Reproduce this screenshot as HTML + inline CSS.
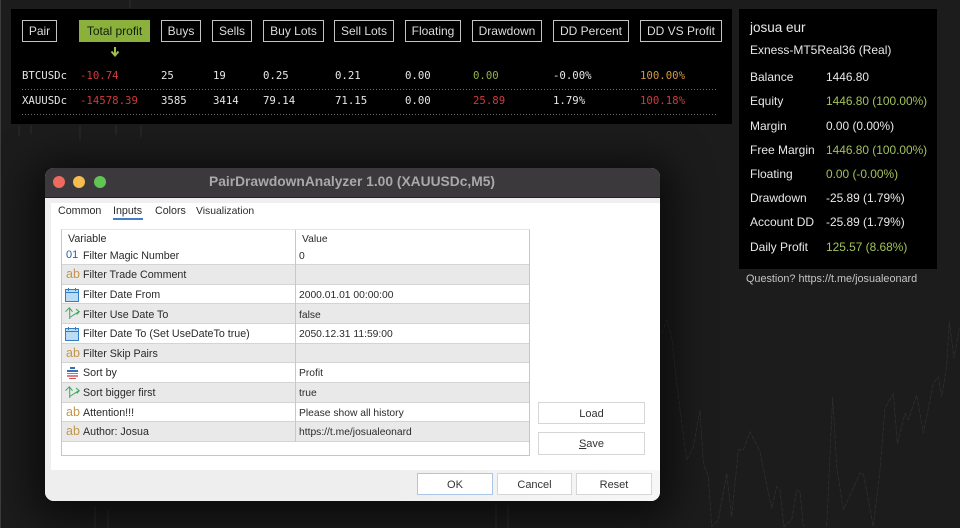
<!DOCTYPE html>
<html><head><meta charset="utf-8"><style>
html,body{margin:0;padding:0}
body{width:960px;height:528px;overflow:hidden;background:#1c1c1c;position:relative;font-family:"Liberation Sans",sans-serif}
.a{position:absolute;white-space:nowrap}
.btn{position:absolute;top:20px;height:20px;border:1px solid #c4c4c4;color:#dcdcdc;font-size:12px;line-height:20px;text-align:center;white-space:nowrap;box-sizing:content-box}
.m{position:absolute;font:10.7px/12px "DejaVu Sans Mono",monospace;color:#e6e6e6;white-space:nowrap}
.r{color:#cf3a3a}.g{color:#8fb04a}.o{color:#d39a3c}
.dot{position:absolute;left:22px;width:695px;height:1px;background:repeating-linear-gradient(90deg,#6e6e6e 0 1px,transparent 1px 3px)}
.l{position:absolute;left:750px;font-size:12px;line-height:14px;color:#e8e8e8;white-space:nowrap}
.v{position:absolute;left:826px;font-size:11.9px;line-height:14px;color:#e8e8e8;white-space:nowrap}
.vg{color:#a3c25a}
.row{position:absolute;left:62px;width:467px;border-bottom:1px solid #d4d4d4;box-sizing:border-box}
.t{position:absolute;left:83px;font:10.7px/14px "Liberation Sans",sans-serif;color:#2a2a2a;white-space:nowrap}
.u{position:absolute;left:299px;font:10.3px/18px "Liberation Sans",sans-serif;color:#2a2a2a;white-space:nowrap}
.ab{position:absolute;left:66px;font:12.5px/12px "Liberation Sans",sans-serif;color:#c4964c}
.b2{position:absolute;box-sizing:border-box;background:#fff;border:1px solid #d6d6d6;font:11px/22px "Liberation Sans",sans-serif;color:#333;text-align:center}
</style></head><body>
<svg class="a" style="left:0;top:0" width="960" height="528">
<rect x="0" y="0" width="1" height="528" fill="#3d3d3d"/>
<g transform="translate(640 270) scale(.33333)" fill="none" stroke="#303030" stroke-width="2.2" stroke-dasharray="14 4">
<polyline points="65,190 80,150 95,200 110,340 140,570 160,530 180,420 190,580 205,620 215,770 235,750 260,610 275,740 295,540 310,540 330,485 360,545 395,715 410,650 420,660 432,770 455,750 470,660 480,665 490,770"/>
<polyline points="560,770 578,380 590,590 610,720 660,610 670,610 700,770 720,600 735,415 760,370 772,520 795,430 805,450 830,375 850,490 880,340 895,320 905,380 920,290 928,155 942,265 958,175"/>
</g>
<g stroke="#2e2e2e" stroke-width="1" fill="none">
<path d="M130 0V8M19 125V136M31 125V134M80 125V140M141 125V137M116 125V135"/>
<path d="M95 506V528M108 510V528M496 504V528M508 505V528"/>
</g>
</svg>

<!-- top panel -->
<div class="a" style="left:11px;top:9px;width:721px;height:115px;background:#000"></div>
<div class="btn" style="left:22px;width:33px">Pair</div>
<div class="btn" style="left:79px;width:71px;background:#8cb03c;border:0;height:22px;line-height:22px;color:#10200a">Total profit</div>
<div class="btn" style="left:161px;width:38px">Buys</div>
<div class="btn" style="left:212px;width:38px">Sells</div>
<div class="btn" style="left:263px;width:59px">Buy Lots</div>
<div class="btn" style="left:334px;width:58px">Sell Lots</div>
<div class="btn" style="left:405px;width:54px">Floating</div>
<div class="btn" style="left:472px;width:68px">Drawdown</div>
<div class="btn" style="left:553px;width:74px">DD Percent</div>
<div class="btn" style="left:640px;width:80px">DD VS Profit</div>
<svg class="a" style="left:110px;top:46px" width="10" height="11"><path d="M5 1V9M1.5 5.5L5 9.5L8.5 5.5" fill="none" stroke="#9dc04e" stroke-width="2"/></svg>

<div class="m" style="left:22px;top:70px">BTCUSDc</div><div class="m r" style="left:80px;top:70px">-10.74</div>
<div class="m" style="left:161px;top:70px">25</div><div class="m" style="left:213px;top:70px">19</div>
<div class="m" style="left:263px;top:70px">0.25</div><div class="m" style="left:335px;top:70px">0.21</div>
<div class="m" style="left:405px;top:70px">0.00</div><div class="m g" style="left:473px;top:70px">0.00</div>
<div class="m" style="left:553px;top:70px">-0.00%</div><div class="m o" style="left:640px;top:70px">100.00%</div>
<div class="dot" style="top:89px"></div>
<div class="m" style="left:22px;top:95px">XAUUSDc</div><div class="m r" style="left:80px;top:95px">-14578.39</div>
<div class="m" style="left:161px;top:95px">3585</div><div class="m" style="left:213px;top:95px">3414</div>
<div class="m" style="left:263px;top:95px">79.14</div><div class="m" style="left:335px;top:95px">71.15</div>
<div class="m" style="left:405px;top:95px">0.00</div><div class="m r" style="left:473px;top:95px">25.89</div>
<div class="m" style="left:553px;top:95px">1.79%</div><div class="m r" style="left:640px;top:95px">100.18%</div>
<div class="dot" style="top:114px"></div>

<!-- account panel -->
<div class="a" style="left:739px;top:9px;width:198px;height:260px;background:#000"></div>
<div class="l" style="top:21px;font-size:13.5px">josua eur</div>
<div class="l" style="top:43px">Exness-MT5Real36 (Real)</div>
<div class="l" style="top:70px">Balance</div><div class="v" style="top:70px">1446.80</div>
<div class="l" style="top:94px">Equity</div><div class="v vg" style="top:94px">1446.80 (100.00%)</div>
<div class="l" style="top:119px">Margin</div><div class="v" style="top:119px">0.00 (0.00%)</div>
<div class="l" style="top:143px">Free Margin</div><div class="v vg" style="top:143px">1446.80 (100.00%)</div>
<div class="l" style="top:167px">Floating</div><div class="v vg" style="top:167px">0.00 (-0.00%)</div>
<div class="l" style="top:191px">Drawdown</div><div class="v" style="top:191px">-25.89 (1.79%)</div>
<div class="l" style="top:215px">Account DD</div><div class="v" style="top:215px">-25.89 (1.79%)</div>
<div class="l" style="top:240px">Daily Profit</div><div class="v vg" style="top:240px">125.57 (8.68%)</div>
<div class="a" style="left:746px;top:273px;font-size:10.85px;line-height:13px;color:#c4c4c4">Question? https://t.me/josualeonard</div>

<!-- dialog -->
<div class="a" style="left:45px;top:168px;width:615px;height:333px;background:#efefef;border-radius:9px;box-shadow:0 6px 40px 12px rgba(0,0,0,.62);overflow:hidden">
  <div class="a" style="left:0;top:0;width:615px;height:29px;background:#3b393b;border-bottom:1px solid #222"></div>
  <div class="a" style="left:6px;top:35px;width:609px;height:267px;background:#fff"></div>
  <div class="a" style="left:0;top:302px;width:615px;height:31px;background:linear-gradient(90deg,#eee 0,#eee 55%,#f7f7f7 100%)"></div>
</div>
<div class="a" style="left:53px;top:176px;width:12px;height:12px;border-radius:50%;background:#ee6a5f"></div>
<div class="a" style="left:73px;top:176px;width:12px;height:12px;border-radius:50%;background:#f5bd4f"></div>
<div class="a" style="left:94px;top:176px;width:12px;height:12px;border-radius:50%;background:#61c454"></div>
<div class="a" style="left:209px;top:174px;font:bold 13.8px/16px 'Liberation Sans',sans-serif;color:#aaa8aa">PairDrawdownAnalyzer 1.00 (XAUUSDc,M5)</div>

<div class="t" style="left:58px;top:204px">Common</div>
<div class="t" style="left:113px;top:204px">Inputs</div>
<div class="a" style="left:113px;top:218px;width:30px;height:2px;background:#3f7fc4"></div>
<div class="t" style="left:155px;top:204px">Colors</div>
<div class="t" style="left:196px;top:205px;font-size:10.4px">Visualization</div>

<!-- table -->
<div class="a" style="left:61px;top:229px;width:469px;height:227px;box-sizing:border-box;border:1px solid #c6c6c6;border-top-color:#e6e6e6;background:#fff"></div>
<div class="row" style="top:245px;height:20px;background:#fff"></div>
<div class="row" style="top:265px;height:20px;background:#e9e9e9"></div>
<div class="row" style="top:285px;height:19px;background:#fff"></div>
<div class="row" style="top:304px;height:20px;background:#e9e9e9"></div>
<div class="row" style="top:324px;height:20px;background:#fff"></div>
<div class="row" style="top:344px;height:19px;background:#e9e9e9"></div>
<div class="row" style="top:363px;height:20px;background:#fff"></div>
<div class="row" style="top:383px;height:20px;background:#e9e9e9"></div>
<div class="row" style="top:403px;height:19px;background:#fff"></div>
<div class="row" style="top:422px;height:20px;background:#e9e9e9"></div>
<div class="a" style="left:295px;top:230px;width:1px;height:212px;background:#c8c8c8"></div>

<div class="t" style="left:68px;top:232px">Variable</div><div class="u" style="left:302px;top:231px">Value</div>
<div class="a" style="left:66px;top:249px;font:11px/12px 'Liberation Sans',sans-serif;color:#2a5f9e">01</div>
<div class="t" style="top:249px">Filter Magic Number</div><div class="u" style="top:248px">0</div>
<div class="ab" style="top:268px">ab</div><div class="t" style="top:268px">Filter Trade Comment</div>
<svg class="a" style="left:65px;top:288px" width="14" height="14"><rect x=".5" y="1.5" width="13" height="12" fill="#bcdcf5" stroke="#2f7fc8"/><path d="M.5 4.5H13.5" stroke="#2f7fc8"/><path d="M3.5 0V3M10.5 0V3" stroke="#2f7fc8"/></svg>
<div class="t" style="top:288px">Filter Date From</div><div class="u" style="top:287px">2000.01.01 00:00:00</div>
<svg class="a" style="left:65px;top:307px" width="15" height="13"><path d="M4.7 12V1M.5 4.7L4.3 .8L7.5 4.7M4.7 10.5L13.7 4.7M11 2L14.3 4.7L11.7 7.5" fill="none" stroke="#3ea65a" stroke-width="1"/></svg>
<div class="t" style="top:308px">Filter Use Date To</div><div class="u" style="top:307px">false</div>
<svg class="a" style="left:65px;top:327px" width="14" height="14"><rect x=".5" y="1.5" width="13" height="12" fill="#bcdcf5" stroke="#2f7fc8"/><path d="M.5 4.5H13.5" stroke="#2f7fc8"/><path d="M3.5 0V3M10.5 0V3" stroke="#2f7fc8"/></svg>
<div class="t" style="top:327px">Filter Date To (Set UseDateTo true)</div><div class="u" style="top:326px">2050.12.31 11:59:00</div>
<div class="ab" style="top:347px">ab</div><div class="t" style="top:347px">Filter Skip Pairs</div>
<svg class="a" style="left:66px;top:367px" width="13" height="12"><path d="M4 1H9M1 4H12" stroke="#3a6db5" stroke-width="2"/><path d="M1 6.5H12" stroke="#888"/><path d="M1 9H12" stroke="#d0525a" stroke-width="1.5"/><path d="M3 11.5H10" stroke="#d0525a"/></svg>
<div class="t" style="top:366px">Sort by</div><div class="u" style="top:365px">Profit</div>
<svg class="a" style="left:65px;top:386px" width="15" height="13"><path d="M4.7 12V1M.5 4.7L4.3 .8L7.5 4.7M4.7 10.5L13.7 4.7M11 2L14.3 4.7L11.7 7.5" fill="none" stroke="#3ea65a" stroke-width="1"/></svg>
<div class="t" style="top:386px">Sort bigger first</div><div class="u" style="top:385px">true</div>
<div class="ab" style="top:406px">ab</div><div class="t" style="top:406px">Attention!!!</div><div class="u" style="top:405px">Please show all history</div>
<div class="ab" style="top:425px">ab</div><div class="t" style="top:425px">Author: Josua</div><div class="u" style="top:424px">https://t.me/josualeonard</div>

<div class="b2" style="left:538px;top:402px;width:107px;height:22px">Load</div>
<div class="b2" style="left:538px;top:432px;width:107px;height:23px"><u>S</u>ave</div>
<div class="b2" style="left:417px;top:473px;width:76px;height:22px;border-color:#a9c6e6">OK</div>
<div class="b2" style="left:497px;top:473px;width:75px;height:22px">Cancel</div>
<div class="b2" style="left:576px;top:473px;width:76px;height:22px">Reset</div>
</body></html>
